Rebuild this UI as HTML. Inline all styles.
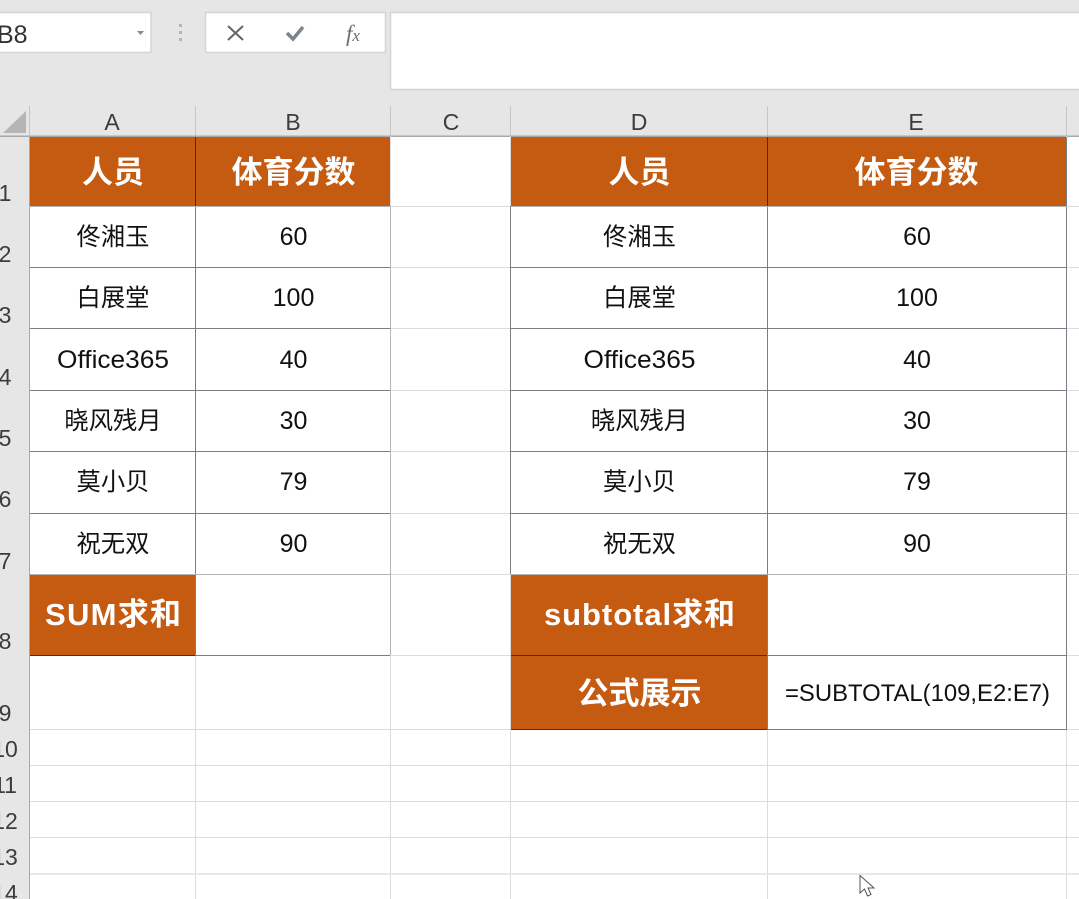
<!DOCTYPE html>
<html><head><meta charset="utf-8"><style>
html,body{margin:0;padding:0;background:#fff;width:1079px;height:899px;overflow:hidden}
svg{display:block;font-family:"Liberation Sans","Noto Sans CJK SC",sans-serif}
.h{font-size:31px;font-weight:700;fill:#fff;text-anchor:middle;font-family:"Liberation Sans","Noto Sans CJK SC",sans-serif}
.c{font-size:24.300px;fill:#111;text-anchor:middle;font-family:"Noto Sans CJK SC",sans-serif}
.n{font-size:25px;fill:#111;text-anchor:middle}
.l{font-size:23px;fill:#3c3c3c;text-anchor:middle}
.r{font-size:23px;fill:#3c3c3c;text-anchor:middle}
</style></head><body>
<svg width="1079" height="899" viewBox="0 0 1079 899" xmlns="http://www.w3.org/2000/svg">
<rect width="1079" height="899" fill="#fff"/>
<rect width="1079" height="136" fill="#e6e6e6"/>
<rect x="0" y="136" width="29" height="763" fill="#e6e6e6"/>
<!-- toolbar boxes -->
<rect x="-2" y="12.500" width="153" height="40" fill="#fff" stroke="#d4d4d4" stroke-width="1.500"/>
<rect x="205.500" y="12.500" width="180" height="40" fill="#fff" stroke="#d4d4d4" stroke-width="1.500"/>
<rect x="390.500" y="12.500" width="700" height="77" fill="#fff" stroke="#d4d4d4" stroke-width="1.500"/>
<text x="-3" y="43" font-size="25" fill="#333">B8</text>
<path d="M137 31h7l-3.500 4z" fill="#858a90"/>
<rect x="179" y="24" width="3" height="3" fill="#b4b4b4"/><rect x="179" y="31" width="3" height="3" fill="#b4b4b4"/><rect x="179" y="38" width="3" height="3" fill="#b4b4b4"/>
<path d="M228 26l15 14M243 26l-15 14" stroke="#62666b" stroke-width="2" fill="none"/>
<path d="M287 33l6 6 10-12" stroke="#7d858c" stroke-width="3.500" fill="none"/>
<text x="346" y="41" font-family="Liberation Serif" font-style="italic" font-size="23" fill="#6a6e73">f<tspan font-size="17">x</tspan></text>
<!-- corner -->
<path d="M26 111v22H3z" fill="#b5b5b5"/>
<!-- column header separators -->
<g stroke="#c6c6c6" stroke-width="1"><path d="M29.500 106v30M195.500 106v30M390.500 106v30M510.500 106v30M767.500 106v30M1066.500 106v30"/></g>
<rect x="0" y="135.500" width="1079" height="1.500" fill="#a8a8a8"/>
<text class="l" x="112" y="130">A</text><text class="l" x="293" y="130">B</text><text class="l" x="451" y="130">C</text><text class="l" x="639" y="130">D</text><text class="l" x="916" y="130">E</text>
<!-- light gridlines -->
<g stroke="#dcdcdc" stroke-width="1" fill="none">
<path d="M29 206.500H1079M29 267.500H1079M29 328.500H1079M29 390.500H1079M29 451.500H1079M29 513.500H1079M29 574.500H1079M29 655.500H1079M29 729.500H1079M29 765.500H1079M29 801.500H1079M29 837.500H1079M29 873.500H1079"/>
<path d="M195.500 655V899M390.500 136V899M510.500 136V899M767.500 729V899M1066.500 136V899"/>
</g>
<rect x="29" y="873" width="1050" height="2" fill="#e8e8e8"/>
<path d="M29.500 136V899" stroke="#a8a8a8"/>
<!-- orange fills -->
<g fill="#c55a11">
<rect x="30" y="137" width="360" height="69"/>
<rect x="511" y="137" width="556" height="69"/>
<rect x="30" y="575" width="165" height="80"/>
<rect x="511" y="575" width="256" height="154"/>
</g>
<!-- table borders -->
<g stroke="#7a7f85" stroke-width="1" fill="none">
<path d="M30 267.500H390M30 328.500H390M30 390.500H390M30 451.500H390M30 513.500H390M195 655.500H390"/>
<path d="M195.500 206V655"/>
<path d="M511 267.500H1067M511 328.500H1067M511 390.500H1067M511 451.500H1067M511 513.500H1067M767 655.500H1067M767 729.500H1067"/>
<path d="M510.500 206V574M767.500 206V729M1066.500 137V729"/>
</g>
<g stroke="#b5b5b5" stroke-width="1" fill="none">
<path d="M390.500 206V655M30 206.500H390M511 206.500H1067M30 574.500H390M511 574.500H1067"/>
</g>
<g stroke="#5a2a08" stroke-width="1" fill="none">
<path d="M195.500 137V206M767.500 137V206M511 655.500H767M511 729.500H767M30 655.500H195"/>
</g>
<!-- header row -->
<text class="h" x="113" y="183">人员</text><text class="h" x="293.500" y="183">体育分数</text>
<text class="h" x="639.500" y="183">人员</text><text class="h" x="916.500" y="183">体育分数</text>
<!-- left table -->
<text class="c" x="113" y="245">佟湘玉</text><text class="n" x="293.500" y="245">60</text>
<text class="c" x="113" y="306">白展堂</text><text class="n" x="293.500" y="306">100</text>
<text class="n" x="113" y="368" textLength="112" lengthAdjust="spacingAndGlyphs">Office365</text><text class="n" x="293.500" y="368">40</text>
<text class="c" x="113" y="429">晓风残月</text><text class="n" x="293.500" y="429">30</text>
<text class="c" x="113" y="490">莫小贝</text><text class="n" x="293.500" y="490">79</text>
<text class="c" x="113" y="552">祝无双</text><text class="n" x="293.500" y="552">90</text>
<text class="h" x="113" y="625" textLength="136">SUM求和</text>
<!-- right table -->
<text class="c" x="639.500" y="245">佟湘玉</text><text class="n" x="917" y="245">60</text>
<text class="c" x="639.500" y="306">白展堂</text><text class="n" x="917" y="306">100</text>
<text class="n" x="639.500" y="368" textLength="112" lengthAdjust="spacingAndGlyphs">Office365</text><text class="n" x="917" y="368">40</text>
<text class="c" x="639.500" y="429">晓风残月</text><text class="n" x="917" y="429">30</text>
<text class="c" x="639.500" y="490">莫小贝</text><text class="n" x="917" y="490">79</text>
<text class="c" x="639.500" y="552">祝无双</text><text class="n" x="917" y="552">90</text>
<text class="h" x="639.500" y="625" textLength="191">subtotal求和</text>
<text class="h" x="639.500" y="704">公式展示</text>
<text x="785" y="701" font-size="24" fill="#111" textLength="265" lengthAdjust="spacingAndGlyphs">=SUBTOTAL(109,E2:E7)</text>
<!-- row numbers -->
<g>
<text class="r" x="5" y="201">1</text><text class="r" x="5" y="262">2</text><text class="r" x="5" y="323">3</text><text class="r" x="5" y="385">4</text><text class="r" x="5" y="446">5</text><text class="r" x="5" y="507">6</text><text class="r" x="5" y="569">7</text><text class="r" x="5" y="649">8</text><text class="r" x="5" y="721">9</text>
<text class="r" x="5" y="757">10</text><text class="r" x="5" y="793">11</text><text class="r" x="5" y="829">12</text><text class="r" x="5" y="865">13</text><text class="r" x="5" y="901">14</text>
</g>
<!-- cursor -->
<path d="M860 875.500V893l4.500-4 3 7 3.500-1.500-3-6.500h6z" fill="#fff" stroke="#555" stroke-width="1"/>
</svg>
</body></html>
